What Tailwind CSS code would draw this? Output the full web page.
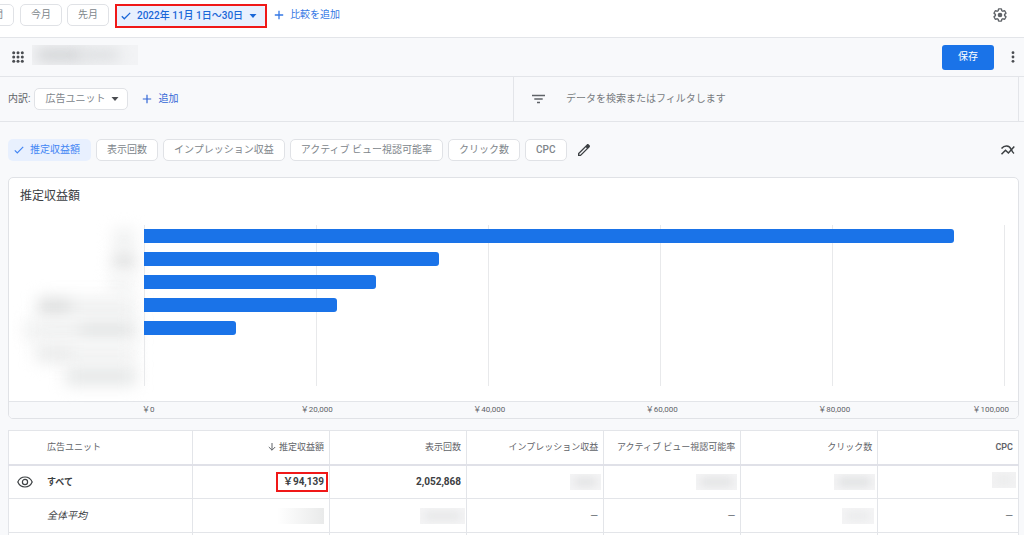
<!DOCTYPE html>
<html lang="ja">
<head>
<meta charset="utf-8">
<meta name="viewport" content="width=device-width, initial-scale=1">
<title>推定収益額</title>
<script src="https://cdn.jsdelivr.net/npm/@tailwindcss/browser@4"></script>
</head>
<body class="flex h-screen flex-col overflow-hidden bg-[#f8f9fb] font-[Roboto,'Noto_Sans_CJK_JP',sans-serif] text-[10px] leading-4 text-[#3c4043]">

<!-- Date range -->
<header class="flex h-[38px] shrink-0 items-start justify-between border-b border-[#e3e5e9] bg-white">
  <div class="flex items-start">
    <div class="mt-1 flex w-[14px] justify-end overflow-hidden">
      <button class="h-[22px] shrink-0 rounded-[5px] border border-[#e0e2e6] px-[10px] text-[#80868b]">過去 7 日間</button>
    </div>
    <button class="mt-1 ml-1.5 h-[22px] rounded-[5px] border border-[#e0e2e6] px-[10px] text-[#80868b]">今月</button>
    <button class="mt-1 ml-[5px] h-[22px] rounded-[5px] border border-[#e0e2e6] px-[10px] text-[#80868b]">先月</button>
    <div class="mt-1 ml-1.5 border-2 border-[#f01818]">
      <button class="flex h-5 items-center gap-1.5 rounded-[3px] bg-[#e8f0fe] pr-2 pl-1 font-medium text-[#1a67d8]">
        <svg class="h-[10px] w-[10px]" viewBox="0 0 10 10" fill="none" stroke="currentColor" stroke-width="1.3"><path d="M.8 5.3 3.3 7.8 9.2 1.9"/></svg>
        <span>2022年 11月 1日〜30日</span>
        <svg class="h-1 w-2" viewBox="0 0 8 4" fill="currentColor"><path d="M.5 0h7L4 4z"/></svg>
      </button>
    </div>
    <button class="mt-1 ml-[7px] flex h-[22px] items-center gap-1.5 text-[#3578e5]">
      <svg class="h-[10px] w-[10px]" viewBox="0 0 10 10" fill="none" stroke="currentColor" stroke-width="1.3"><path d="M5 .8v8.4M.8 5h8.4"/></svg>
      <span>比較を追加</span>
    </button>
  </div>
  <button class="mt-[7px] mr-4" aria-label="設定">
    <svg class="h-4 w-4" viewBox="0 0 24 24" fill="#5f6368"><path d="M13.85 22.25h-3.7c-.74 0-1.36-.54-1.45-1.27l-.27-1.89c-.27-.14-.53-.29-.79-.46l-1.8.72c-.7.26-1.47-.03-1.81-.65L2.2 15.53c-.35-.66-.2-1.44.36-1.88l1.53-1.19c-.01-.15-.02-.3-.02-.46 0-.15.01-.31.02-.46l-1.52-1.19c-.59-.45-.74-1.26-.37-1.88l1.85-3.19c.34-.62 1.11-.9 1.79-.63l1.81.73c.26-.17.52-.32.78-.46l.27-1.91c.09-.7.71-1.25 1.44-1.25h3.7c.74 0 1.36.54 1.45 1.27l.27 1.89c.27.14.53.29.79.46l1.8-.72c.71-.26 1.48.03 1.82.65l1.84 3.18c.36.66.2 1.44-.36 1.88l-1.52 1.19c.01.15.02.3.02.46s-.01.31-.02.46l1.52 1.19c.56.45.72 1.23.37 1.86l-1.86 3.22c-.34.62-1.11.9-1.8.63l-1.8-.72c-.26.17-.52.32-.78.46l-.27 1.91c-.1.68-.72 1.22-1.46 1.22zm-3.23-2h2.76l.37-2.55.53-.22c.44-.18.88-.44 1.34-.78l.45-.34 2.38.96 1.38-2.4-2.03-1.58.07-.56c.03-.26.06-.51.06-.78s-.03-.53-.06-.78l-.07-.56 2.03-1.58-1.39-2.4-2.39.96-.45-.35c-.42-.32-.87-.58-1.33-.77l-.52-.22-.37-2.55h-2.76l-.37 2.55-.53.21c-.44.19-.88.44-1.34.79l-.45.33-2.38-.95-1.39 2.39 2.03 1.58-.07.56a7 7 0 0 0-.06.79c0 .26.02.53.06.78l.07.56-2.03 1.58 1.38 2.4 2.39-.96.45.35c.43.33.86.58 1.33.77l.53.22.38 2.55z"/><circle cx="12" cy="12" r="3.5"/></svg>
  </button>
</header>

<!-- Report title -->
<div class="flex h-[39px] shrink-0 items-center justify-between border-b border-[#e3e5e9] pr-[5px]">
  <div class="flex items-center">
    <button class="ml-3" aria-label="レポート一覧">
      <svg class="h-3 w-3" viewBox="0 0 12 12" fill="#4a4d51"><circle cx="1.7" cy="1.7" r="1.5"/><circle cx="6" cy="1.7" r="1.5"/><circle cx="10.3" cy="1.7" r="1.5"/><circle cx="1.7" cy="6" r="1.5"/><circle cx="6" cy="6" r="1.5"/><circle cx="10.3" cy="6" r="1.5"/><circle cx="1.7" cy="10.3" r="1.5"/><circle cx="6" cy="10.3" r="1.5"/><circle cx="10.3" cy="10.3" r="1.5"/></svg>
    </button>
    <div class="mb-1 ml-2 flex h-5 w-[106px] items-center overflow-hidden bg-[#f2f3f5]">
      <div class="ml-1 h-3 w-12 shrink-0 rounded-full bg-[#cfd1d3] blur-[7px]"></div>
      <div class="-ml-1 h-3 w-10 shrink-0 rounded-full bg-[#dcdee0] blur-[7px]"></div>
    </div>
  </div>
  <div class="flex items-center">
    <button class="h-[25px] w-[52px] rounded-[3px] bg-[#1a73e8] text-white">保存</button>
    <button class="ml-[13px] w-3" aria-label="その他">
      <svg class="mx-auto h-3 w-1" viewBox="0 0 4 12" fill="#4a4d51"><circle cx="2" cy="1.7" r="1.4"/><circle cx="2" cy="6" r="1.4"/><circle cx="2" cy="10.3" r="1.4"/></svg>
    </button>
  </div>
</div>

<!-- Breakdown and filter -->
<div class="flex h-[45px] shrink-0 border-b border-[#e3e5e9] pr-[5px]">
  <div class="flex w-[514px] items-center border-r border-[#e3e5e9] pl-2">
    <span class="text-[#5f6368]">内訳:</span>
    <button class="ml-1 flex h-[22px] items-center gap-1.5 rounded-[5px] border border-[#e0e2e6] bg-white pr-2 pl-[10px] text-[#80868b]">
      <span>広告ユニット</span>
      <svg class="h-1 w-2" viewBox="0 0 8 4" fill="#4a4d51"><path d="M.5 0h7L4 4z"/></svg>
    </button>
    <button class="ml-[14px] flex items-center gap-1.5 text-[#3367d6]">
      <svg class="h-[10px] w-[10px]" viewBox="0 0 10 10" fill="none" stroke="currentColor" stroke-width="1.2"><path d="M5 .8v8.4M.8 5h8.4"/></svg>
      <span>追加</span>
    </button>
  </div>
  <label class="flex flex-1 items-center border-r border-[#e3e5e9] pl-[18px]">
    <svg class="h-[10px] w-[13px]" viewBox="0 0 13 10" fill="none" stroke="#5f6368" stroke-width="1.3"><path d="M0 1.5h13M2.3 5h8.4M5 8.5h3"/></svg>
    <input type="text" aria-label="データを検索またはフィルタします" placeholder="データを検索またはフィルタします" class="ml-[21px] flex-1 bg-transparent outline-none placeholder:text-[#777b80]">
  </label>
</div>

<main class="pr-[5px] pl-2">
  <!-- Metrics -->
  <div class="flex h-[55px] items-center justify-between pr-[3px]">
    <div class="flex items-center gap-[5px] text-[#80868b]">
      <button class="flex h-[22px] items-center gap-1.5 rounded-[5px] bg-[#e8f0fe] pr-[11px] pl-1.5 text-[#4285f4]">
        <svg class="h-[10px] w-[10px]" viewBox="0 0 10 10" fill="none" stroke="currentColor" stroke-width="1.2"><path d="M.8 5.3 3.3 7.8 9.2 1.9"/></svg>
        <span>推定収益額</span>
      </button>
      <button class="h-[22px] rounded-[5px] border border-[#e0e2e6] bg-white px-[10px]">表示回数</button>
      <button class="h-[22px] rounded-[5px] border border-[#e0e2e6] bg-white px-[10px]">インプレッション収益</button>
      <button class="h-[22px] rounded-[5px] border border-[#e0e2e6] bg-white px-[10px]">アクティブ ビュー視認可能率</button>
      <button class="h-[22px] rounded-[5px] border border-[#e0e2e6] bg-white px-[10px]">クリック数</button>
      <button class="h-[22px] rounded-[5px] border border-[#e0e2e6] bg-white px-[10px] font-medium">CPC</button>
      <button class="ml-1" aria-label="指標を編集">
        <svg class="h-4 w-4" viewBox="0 0 24 24" fill="#3c4043"><path d="M20.41 4.94l-1.35-1.35c-.78-.78-2.05-.78-2.83 0L3 16.82V21h4.18L20.41 7.77c.79-.78.79-2.05 0-2.83zm-14 14.12L5 19v-1.36l9.82-9.82 1.41 1.41-9.82 9.83z"/></svg>
      </button>
    </div>
    <button aria-label="グラフの種類">
      <svg class="h-4 w-4" viewBox="0 0 16 16" fill="none" stroke="#3c4043" stroke-width="1.5"><path d="M1.500 6.500C4.500 3 9.200 3.200 11.200 7.300c.7 1.500 1.300 3 2.800 4.200"/><path d="M1.500 12.300 5.500 8.200 8.400 11 14.300 4.500"/></svg>
    </button>
  </div>

  <!-- Earnings by ad unit -->
  <section class="overflow-hidden rounded-[5px] border border-[#e0e2e6] bg-white">
    <h2 class="px-[11px] pt-[10px] text-[12px] leading-4">推定収益額</h2>
    <div class="mt-[21px] flex h-[161px] pr-[13px]">
      <div class="flex w-[135px] shrink-0 flex-col items-end gap-[5px] pt-1 pr-2" aria-hidden="true">
        <div class="h-[18px] w-6 rounded-full bg-[#eeefef] blur-[8px]"></div>
        <div class="h-[18px] w-6 rounded-full bg-[#dcdddd] blur-[8px]"></div>
        <div class="h-[18px] w-7 rounded-full bg-[#f2f3f3] blur-[8px]"></div>
        <div class="flex h-[18px] w-[98px] blur-[8px]"><span class="w-8 bg-[#dcdddd]"></span><span class="flex-1 bg-[#eff0f0]"></span></div>
        <div class="flex h-[18px] w-[112px] blur-[8px]"><span class="w-14 bg-[#eff0f0]"></span><span class="flex-1 bg-[#e2e4e4]"></span></div>
        <div class="flex h-[18px] w-[100px] blur-[8px]"><span class="w-9 bg-[#e9eaea]"></span><span class="flex-1 bg-[#f1f2f2]"></span></div>
        <div class="h-[18px] w-[70px] bg-[#e4e6e6] blur-[8px]"></div>
      </div>
      <div class="relative flex-1">
        <div class="absolute inset-0 grid grid-cols-5 border-r border-[#e8e9eb]">
          <div class="border-l border-[#e8e9eb]"></div><div class="border-l border-[#e8e9eb]"></div><div class="border-l border-[#e8e9eb]"></div><div class="border-l border-[#e8e9eb]"></div><div class="border-l border-[#e8e9eb]"></div>
        </div>
        <div class="relative flex flex-col gap-[9px] pt-1">
          <div class="h-3.5 rounded-r-[3px] bg-[#1a73e8]" style="width:94.1%"></div>
          <div class="h-3.5 rounded-r-[3px] bg-[#1a73e8]" style="width:34.3%"></div>
          <div class="h-3.5 rounded-r-[3px] bg-[#1a73e8]" style="width:26.9%"></div>
          <div class="h-3.5 rounded-r-[3px] bg-[#1a73e8]" style="width:22.4%"></div>
          <div class="h-3.5 rounded-r-[3px] bg-[#1a73e8]" style="width:10.7%"></div>
        </div>
      </div>
    </div>
    <div class="mt-[15px] flex h-[17px] items-center border-t border-[#e3e5e9] bg-[#f8f9fb] pr-[9px] pl-[133px] text-[8px] text-[#5f6368]">
      <span class="flex-1">&#xFFE5;0</span><span class="w-[19.9%] text-center">&#xFFE5;20,000</span><span class="w-[19.9%] text-center">&#xFFE5;40,000</span><span class="w-[19.9%] text-center">&#xFFE5;60,000</span><span class="w-[19.9%] text-center">&#xFFE5;80,000</span><span class="flex-1 text-right">&#xFFE5;100,000</span>
    </div>
  </section>

  <table class="mt-[11px] w-full table-fixed border-collapse border border-[#e3e5e9] bg-white text-right">
    <thead class="text-[9px] text-[#5f6368]">
      <tr class="h-[34px] border-b-2 border-[#e0e1e8] *:border-r *:border-[#e3e5e9] *:pr-[5px] *:font-normal">
        <th scope="col" class="w-[184px] pl-[38px] text-left">広告ユニット</th>
        <th scope="col" class="w-[13.57%]"><span class="flex items-center justify-end gap-[3px]"><svg class="h-2 w-2" viewBox="0 0 8 8" fill="none" stroke="currentColor"><path d="M4 0v7.200M.8 4 4 7.200 7.200 4"/></svg>推定収益額</span></th>
        <th scope="col" class="w-[13.57%]">表示回数</th>
        <th scope="col" class="w-[13.57%]">インプレッション収益</th>
        <th scope="col" class="w-[13.57%] whitespace-nowrap">アクティブ ビュー視認可能率</th>
        <th scope="col" class="w-[13.57%]">クリック数</th>
        <th scope="col"><span class="font-semibold">CPC</span></th>
      </tr>
    </thead>
    <tbody>
      <tr class="h-[34px] border-b border-[#e3e5e9] font-bold *:border-r *:border-[#e3e5e9]">
        <th scope="row" class="text-left text-[9px]"><span class="flex items-center gap-[14px] pl-2"><svg class="h-3 w-4" viewBox="0 0 16 12" fill="none" stroke="#3c4043" stroke-width="1.200"><path d="M.8 6C2.200 2.800 4.900 1 8 1s5.800 1.800 7.200 5C13.800 9.200 11.100 11 8 11S2.200 9.200.8 6z"/><circle cx="8" cy="6" r="2.600"/></svg>すべて</span></th>
        <td class="pr-px"><span class="inline-block border-2 border-[#f01818] pr-0.5 pl-[5px]">&#xFFE5;94,139</span></td>
        <td class="pr-[5px]">2,052,868</td>
        <td class="pr-0.5"><div class="ml-auto h-4 w-[31px] overflow-hidden bg-[#f5f5f6] p-1"><div class="h-2 bg-[#dfe0e1] blur-[5px]"></div></div></td>
        <td class="pr-[3px]"><div class="ml-auto h-4 w-[41px] overflow-hidden bg-[#f5f5f6] p-1"><div class="h-2 bg-[#dfe0e1] blur-[5px]"></div></div></td>
        <td class="pr-0.5"><div class="ml-auto h-4 w-[41px] overflow-hidden bg-[#f5f5f6] p-1"><div class="h-2 bg-[#dcdedf] blur-[5px]"></div></div></td>
        <td class="pr-0.5 pb-1"><div class="ml-auto h-4 w-6 overflow-hidden bg-[#f3f3f4] p-1"><div class="h-2 bg-[#eaebeb] blur-[5px]"></div></div></td>
      </tr>
      <tr class="h-[34px] border-b border-[#e3e5e9] *:border-r *:border-[#e3e5e9]">
        <th scope="row" class="pl-[38px] text-left font-normal italic">全体平均</th>
        <td class="pr-[5px]"><div class="ml-auto h-4 w-[47px] bg-linear-to-r from-white to-[#e9eaea]"></div></td>
        <td class="pr-px"><div class="ml-auto h-4 w-[45px] overflow-hidden bg-[#f5f5f6] p-1"><div class="h-2 bg-[#e4e5e6] blur-[5px]"></div></div></td>
        <td class="pr-[5px] text-[#6f747a]">—</td>
        <td class="pr-[5px] text-[#6f747a]">—</td>
        <td class="pr-[3px]"><div class="ml-auto h-4 w-8 overflow-hidden bg-[#f5f5f6] p-1"><div class="h-2 bg-[#e8e9ea] blur-[5px]"></div></div></td>
        <td class="pr-[5px] text-[#6f747a]">—</td>
      </tr>
      <tr class="*:h-[34px] *:border-r *:border-[#e3e5e9]"><td></td><td></td><td></td><td></td><td></td><td></td><td></td></tr>
    </tbody>
  </table>
</main>
</body>
</html>
